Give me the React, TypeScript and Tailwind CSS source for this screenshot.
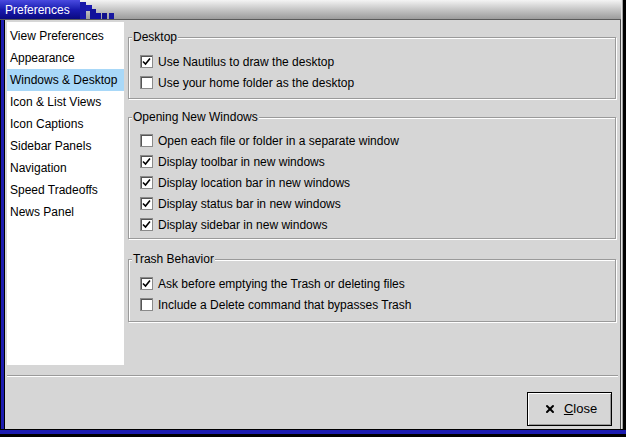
import { X } from "lucide-react";

const sections = [
  { title: "Desktop", pad: "pt-[7px] pb-[5px]", gap: "", items: [
    { label: "Use Nautilus to draw the desktop", on: true },
    { label: "Use your home folder as the desktop", on: false },
  ] },
  { title: "Opening New Windows", pad: "pt-[6px] pb-[3px]", gap: "mt-[11px]", items: [
    { label: "Open each file or folder in a separate window", on: false },
    { label: "Display toolbar in new windows", on: true },
    { label: "Display location bar in new windows", on: true },
    { label: "Display status bar in new windows", on: true },
    { label: "Display sidebar in new windows", on: true },
  ] },
  { title: "Trash Behavior", pad: "pt-[7px] pb-[6px]", gap: "mt-[13px]", items: [
    { label: "Ask before emptying the Trash or deleting files", on: true },
    { label: "Include a Delete command that bypasses Trash", on: false },
  ] },
];

const pages = [
  "View Preferences",
  "Appearance",
  "Windows & Desktop",
  "Icon & List Views",
  "Icon Captions",
  "Sidebar Panels",
  "Navigation",
  "Speed Tradeoffs",
  "News Panel",
];

const CheckBox = ({ on }: { on: boolean }) => (
  <span className="w-[13px] h-[13px] shrink-0 bg-white border border-[#8a8a8a] shadow-[inset_1px_1px_0_#555] flex items-center justify-center">
    {on && (
      <svg width="9" height="9" viewBox="0 0 9 9">
        <path d="M1 4.5 L3.5 7 L8 1.5" fill="none" stroke="#000" strokeWidth="1.6" />
      </svg>
    )}
  </span>
);

type Item = { label: string; on: boolean };

const Frame = ({ title, items, pad, gap }: { title: string; items: Item[]; pad: string; gap: string }) => (
  <fieldset className={"border border-[#9a9a9a] shadow-[1px_1px_0_#fff,inset_1px_1px_0_#fff] " + gap}>
    <legend className="ml-[3px] px-[1px] leading-[14px] bg-[#d6d6d6]">{title}</legend>
    <div className={"flex flex-col pl-[11px] " + pad}>
      {items.map((it) => (
        <div key={it.label} className="h-[21px] flex items-center gap-[5px]">
          <CheckBox on={it.on} />
          <span>{it.label}</span>
        </div>
      ))}
    </div>
  </fieldset>
);

const RightEdge = () => (
  <div className="w-[5px] flex shrink-0">
    <div className="w-[1px] bg-[#e6e6e6]" />
    <div className="w-[1px] bg-[#a0a0a0]" />
    <div className="flex-1 bg-black" />
  </div>
);

export default function App() {
  return (
    <div className="w-[626px] h-[437px] flex flex-col bg-black overflow-hidden font-['Liberation_Sans',Arial,sans-serif] text-[12px] text-black">
      {/* title bar */}
      <div className="h-[20px] shrink-0 flex">
        <div className="flex-1 flex bg-gradient-to-b from-[#f4f4f4] via-[#c6c6c6] to-[#9c9c9c] border-b border-[#5a5a5a]">
          <div className="w-[80px] flex items-center pl-[5px] bg-gradient-to-b from-[#4a4ae0] via-[#1a1ab0] to-[#0a0a80] text-white text-[12px]">
            Preferences
          </div>
          <svg width="36" height="19" viewBox="0 0 36 19" className="shrink-0">
            <rect x="0" y="2" width="6" height="17" fill="#1818a8" />
            <rect x="6" y="5" width="6" height="6" fill="#1a1ab0" />
            <rect x="10" y="9" width="6" height="10" fill="#12129a" />
            <rect x="16" y="13" width="5" height="6" fill="#1010a0" />
            <rect x="22" y="13" width="5" height="6" fill="#10108c" />
            <rect x="29" y="13" width="5" height="6" fill="#1818a0" />
          </svg>
        </div>
        <RightEdge />
      </div>

      {/* body */}
      <div className="flex-1 flex min-h-0">
        <div className="w-[5px] flex shrink-0">
          <div className="w-[1px] bg-black" />
          <div className="w-[3px] bg-[#1c1cb0]" />
          <div className="w-[1px] bg-black" />
        </div>
        <div className="flex-1 flex flex-col bg-[#d6d6d6] border-r border-[#4a4a4a] pl-[2px] pr-[2px] pt-[2px]">
          <div className="h-[343px] flex gap-[4px]">
            <div className="w-[117px] bg-white pt-[3px]">
              {pages.map((p) => (
                <div
                  key={p}
                  className={"h-[22px] flex items-center pl-[3px] " + (p === "Windows & Desktop" ? "bg-[#a8d8f8]" : "")}
                >
                  {p}
                </div>
              ))}
            </div>
            <div className="flex-1 flex flex-col pr-[2px] pt-[8px]">
              {sections.map((s) => (
                <Frame key={s.title} title={s.title} items={s.items} pad={s.pad} gap={s.gap} />
              ))}
            </div>
          </div>
          <div className="mt-[10px] h-[2px] border-t border-[#9a9a9a] border-b border-b-white" />
          <div className="flex justify-end pr-[6px] mt-[15px]">
            <button className="w-[85px] h-[34px] flex items-center justify-center gap-[8px] pl-[2px] bg-[#d6d6d6] border border-black shadow-[inset_1px_1px_0_#fff,inset_-1px_-1px_0_#9a9a9a]">
              <X size={12} strokeWidth={4} />
              <span className="text-[13px]">
                <span className="underline">C</span>lose
              </span>
            </button>
          </div>
        </div>
        <RightEdge />
      </div>
      <div className="h-[8px] shrink-0 flex flex-col">
        <div className="h-[1px] bg-black" />
        <div className="h-[4px] bg-[#1c1cb0]" />
        <div className="flex-1 bg-black" />
      </div>
    </div>
  );
}
